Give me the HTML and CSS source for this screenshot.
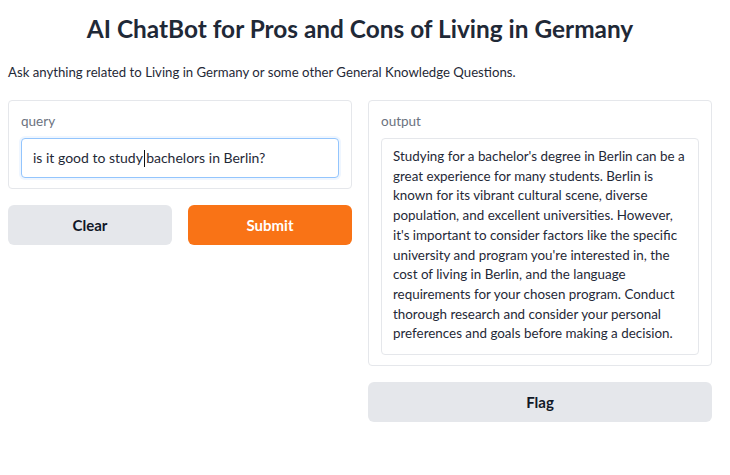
FILE: index.html
```html
<!DOCTYPE html>
<html>
<head>
<meta charset="utf-8">
<link rel="stylesheet" href="styles.css">
</head>
<body>
<div class="app">
  <h1 class="title">AI ChatBot for Pros and Cons of Living in Germany</h1>
  <p class="desc">Ask anything related to Living in Germany or some other General Knowledge Questions.</p>
  <div class="cols">
    <div class="col">
      <div class="block">
        <label class="label">query</label>
        <div class="input focused">is it good to study <span class="caret"></span>bachelors in Berlin?</div>
      </div>
      <div class="btnrow">
        <button class="btn secondary">Clear</button>
        <button class="btn primary">Submit</button>
      </div>
    </div>
    <div class="col">
      <div class="block">
        <label class="label">output</label>
        <div class="input output"><span class="ln">Studying for a bachelor's degree in Berlin can be a</span> <span class="ln">great experience for many students. Berlin is</span> <span class="ln">known for its vibrant cultural scene, diverse</span> <span class="ln">population, and excellent universities. However,</span> <span class="ln">it's important to consider factors like the specific</span> <span class="ln">university and program you're interested in, the</span> <span class="ln">cost of living in Berlin, and the language</span> <span class="ln">requirements for your chosen program. Conduct</span> <span class="ln">thorough research and consider your personal</span> <span class="ln">preferences and goals before making a decision.</span></div>
      </div>
      <button class="btn secondary single">Flag</button>
    </div>
  </div>
</div>
</body>
</html>
```
FILE: styles.css
```css
* { box-sizing: border-box; }
body {
  margin: 0;
  background: #fff;
  font-family: Lato, "Noto Sans", sans-serif;
  color: #1f2937;
}
.app { width: 704px; margin-left: 8px; }
.title {
  margin: 0;
  padding-top: 13px;
  height: 44px;
  text-align: center;
  font-size: 24.4px;
  font-weight: 700;
  line-height: 32px;
  color: #1f2937;
}
.desc {
  margin: 18px 0 0;
  font-size: 13.2px;
  line-height: 20px;
  height: 20px;
}
.cols {
  margin-top: 18px;
  display: flex;
  gap: 16px;
  align-items: flex-start;
}
.col {
  flex: 1;
  min-width: 0;
  display: flex;
  flex-direction: column;
  gap: 16px;
}
.block {
  border: 1px solid #e5e7eb;
  border-radius: 4px;
  padding: 12px 12px 10px;
  display: flex;
  flex-direction: column;
}
.label {
  font-size: 13.5px;
  color: #6b7280;
  line-height: 16px;
  height: 16px;
  margin-bottom: 9px;
}
.input {
  border: 1px solid #e5e7eb;
  border-radius: 4px;
  padding: 9px 11px;
  font-size: 14px;
  line-height: 20px;
  color: #1f2937;
  background: #fff;
}
.input.focused {
  border-color: #93c5fd;
  box-shadow: 0 0 0 2px #eff6ff;
}
.caret {
  display: inline-block;
  width: 1px;
  height: 17px;
  background: #111;
  vertical-align: -4px;
  margin: 0 1px 0 -2px;
}
.output {
  padding: 8px 11px 10px;
  font-size: 13.4px;
  line-height: 19.7px;
}
.ln { display: block; white-space: nowrap; }
.btnrow { display: flex; gap: 16px; }
.btn {
  flex: 1;
  height: 40px;
  border: none;
  border-radius: 6px;
  font-family: inherit;
  font-size: 15px;
  font-weight: 700;
}
.btn.single { flex: none; }
.secondary { background: #e5e7eb; color: #111827; }
.primary { background: #f97316; color: #fff; }
```
